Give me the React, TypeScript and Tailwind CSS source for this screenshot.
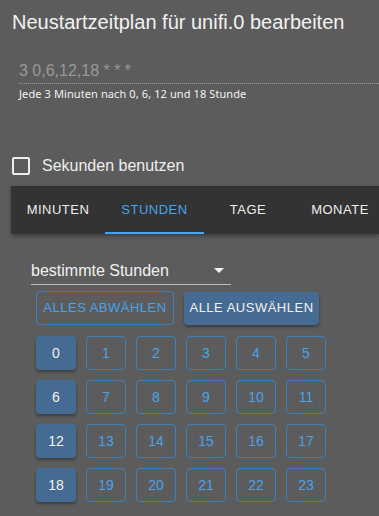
import { useState } from "react";

const TABS = [
  { label: "MINUTEN", w: "w-[94px]" },
  { label: "STUNDEN", w: "w-[99px]" },
  { label: "TAGE", w: "w-[88px]" },
  { label: "MONATE", w: "w-[96px]" },
];
const SELECTED = [0, 6, 12, 18];

export default function App() {
  const [tab, setTab] = useState(1);
  const [hours, setHours] = useState<number[]>(SELECTED);
  const [useSeconds, setUseSeconds] = useState(false);

  const toggle = (h: number) =>
    setHours((prev) => (prev.includes(h) ? prev.filter((x) => x !== h) : [...prev, h]));

  const rows = [0, 1, 2, 3].map((r) => [0, 1, 2, 3, 4, 5].map((c) => r * 6 + c));

  return (
    <div
      className="h-[516px] w-[379px] overflow-hidden bg-[#5c5c5c] text-white"
      style={{ fontFamily: '"Liberation Sans", Arial, sans-serif' }}
    >
      <div className="pl-3 pt-[10px] text-[20px] leading-[24px] text-[#f2f2f2]">
        Neustartzeitplan für unifi.0 bearbeiten
      </div>

      {/* cron input */}
      <div className="ml-[19px] mt-[27px]">
        <div className="pb-[3px] text-[16px] leading-[19px] text-[#999999]">3 0,6,12,18 * * *</div>
        <div className="border-b border-dotted border-[#9a9a9a]" />
        <div
          className="pt-[3px] text-[11px] leading-[14px] tracking-[0.1px] text-[#f2f2f2]"
          style={{ fontFamily: '"Noto Sans", "Open Sans", sans-serif' }}
        >
          Jede 3 Minuten nach 0, 6, 12 und 18 Stunde
        </div>
      </div>

      {/* seconds checkbox */}
      <label className="ml-3 mt-[55px] flex cursor-pointer items-center gap-3">
        <span
          onClick={() => setUseSeconds(!useSeconds)}
          className="flex h-[18px] w-[18px] items-center justify-center rounded-[2px] border-2 border-[#eeeeee]"
        >
          {useSeconds && <span className="h-2 w-2 bg-[#eeeeee]" />}
        </span>
        <span className="text-[16px] leading-[19px] text-[#eeeeee]">Sekunden benutzen</span>
      </label>

      {/* tabs */}
      <div className="ml-[11px] mt-[11px] flex h-[48px] bg-[#333333] shadow-[0_2px_4px_rgba(0,0,0,0.35)]">
        {TABS.map((t, i) => (
          <button
            key={t.label}
            onClick={() => setTab(i)}
            className={
              "relative flex h-full shrink-0 items-center justify-center text-[13px] tracking-[0.5px] " +
              t.w +
              " " +
              (i === tab ? "text-[#4aa3ea]" : "text-[#eeeeee]")
            }
          >
            {t.label}
            {i === tab && <span className="absolute bottom-0 left-0 right-0 h-[2px] bg-[#42a5f5]" />}
          </button>
        ))}
      </div>

      {/* select */}
      <div className="ml-[31px] mt-[27px] flex w-[200px] items-center justify-between border-b border-[#bdbdbd] pb-[4px]">
        <span className="text-[16px] leading-[19px] text-[#f2f2f2]">bestimmte Stunden</span>
        <svg width="10" height="5" viewBox="0 0 10 5" className="mr-[7px]">
          <path d="M0 0h10L5 5z" fill="#f2f2f2" />
        </svg>
      </div>

      <div className="ml-9 mt-[6px] flex items-center gap-[10px]">
        <button
          onClick={() => setHours([])}
          className="h-[34px] w-[138px] rounded-[4px] border border-[#3d82bd] text-[13px] tracking-[0.5px] text-[#4aa3ea]"
        >
          ALLES ABWÄHLEN
        </button>
        <button
          onClick={() => setHours(rows.flat())}
          className="h-[33px] w-[135px] rounded-[4px] bg-[#466b92] text-[13px] tracking-[0.5px] text-[#f2f2f2] shadow-[0_2px_3px_rgba(0,0,0,0.35)]"
        >
          ALLE AUSWÄHLEN
        </button>
      </div>

      <div className="ml-9 mt-[11px] flex flex-col gap-[10px]">
        {rows.map((row, r) => (
          <div key={r} className="flex gap-[10px]">
            {row.map((h) =>
              hours.includes(h) ? (
                <button
                  key={h}
                  onClick={() => toggle(h)}
                  className="h-[34px] w-[40px] rounded-[4px] bg-[#466b92] text-[14px] text-[#f2f2f2] shadow-[0_2px_3px_rgba(0,0,0,0.35)]"
                >
                  {h}
                </button>
              ) : (
                <button
                  key={h}
                  onClick={() => toggle(h)}
                  className="h-[34px] w-[40px] rounded-[4px] border border-[#3d82bd] text-[14px] text-[#4aa3ea]"
                >
                  {h}
                </button>
              )
            )}
          </div>
        ))}
      </div>
    </div>
  );
}
